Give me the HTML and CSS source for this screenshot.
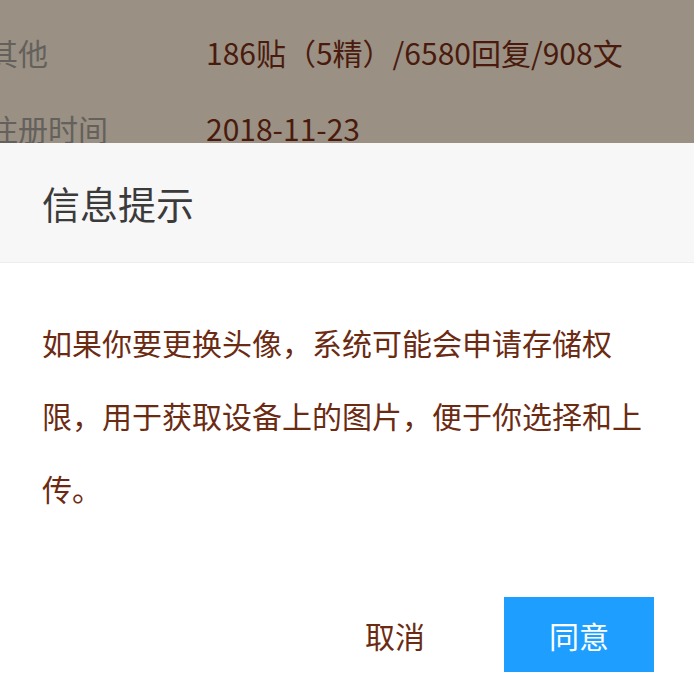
FILE: index.html
```html
<!DOCTYPE html>
<html lang="zh-CN">
<head>
    <meta charset="UTF-8">
    <meta name="viewport" content="width=device-width, initial-scale=1.0">
    <title>信息提示</title>
    <link rel="stylesheet" href="styles.css">
</head>
<body>
    <div class="page">
        <div class="info-row">
            <div class="label">其他</div>
            <div class="value">186贴（5精）/6580回复/908文</div>
        </div>
        <div class="info-row">
            <div class="label">注册时间</div>
            <div class="value">2018-11-23</div>
        </div>
    </div>

    <div class="dialog">
        <div class="dialog-title">信息提示</div>
        <div class="dialog-content">
            如果你要更换头像，系统可能会申请存储权限，用于获取设备上的图片，便于你选择和上传。
        </div>
        <div class="dialog-buttons">
            <button class="btn cancel">取消</button>
            <button class="btn primary">同意</button>
        </div>
    </div>
</body>
</html>
```

FILE: styles.css
```css
body {
    font-family: "Noto Sans CJK SC", "Noto Sans", sans-serif;
    margin: 0;
    padding: 0;
    width: 694px;
    height: 694px;
    overflow: hidden;
    background-color: #ffffff;
}

.page {
    background-color: #9a9084;
    height: 143px;
    padding-top: 14px;
    box-sizing: border-box;
    overflow: hidden;
}

.info-row {
    display: flex;
    align-items: center;
    height: 76px;
    font-size: 30px;
    margin-left: -12px;
}

.label {
    width: 218px;
    flex-shrink: 0;
    color: #64615c;
}

.value {
    color: #4a1b0d;
    white-space: nowrap;
}

.dialog {
    background: white;
}

.dialog-title {
    height: 119px;
    display: flex;
    align-items: center;
    padding: 0 42px;
    background-color: #f7f7f7;
    border-bottom: 1px solid #eeeeee;
    color: #3b3b3b;
    font-size: 38px;
}

.dialog-content {
    padding: 43px 42px 0;
    font-size: 30px;
    line-height: 73px;
    color: #6b2b13;
}

.dialog-buttons {
    display: flex;
    justify-content: flex-end;
    gap: 34px;
    padding-right: 40px;
    margin-top: 72px;
}

.btn {
    font-family: inherit;
    font-size: 30px;
    width: 150px;
    height: 75px;
    border: none;
    padding: 0;
    cursor: pointer;
}

.btn.cancel {
    background: white;
    color: #6b2b13;
}

.btn.primary {
    background-color: #1e9fff;
    color: white;
}
```
